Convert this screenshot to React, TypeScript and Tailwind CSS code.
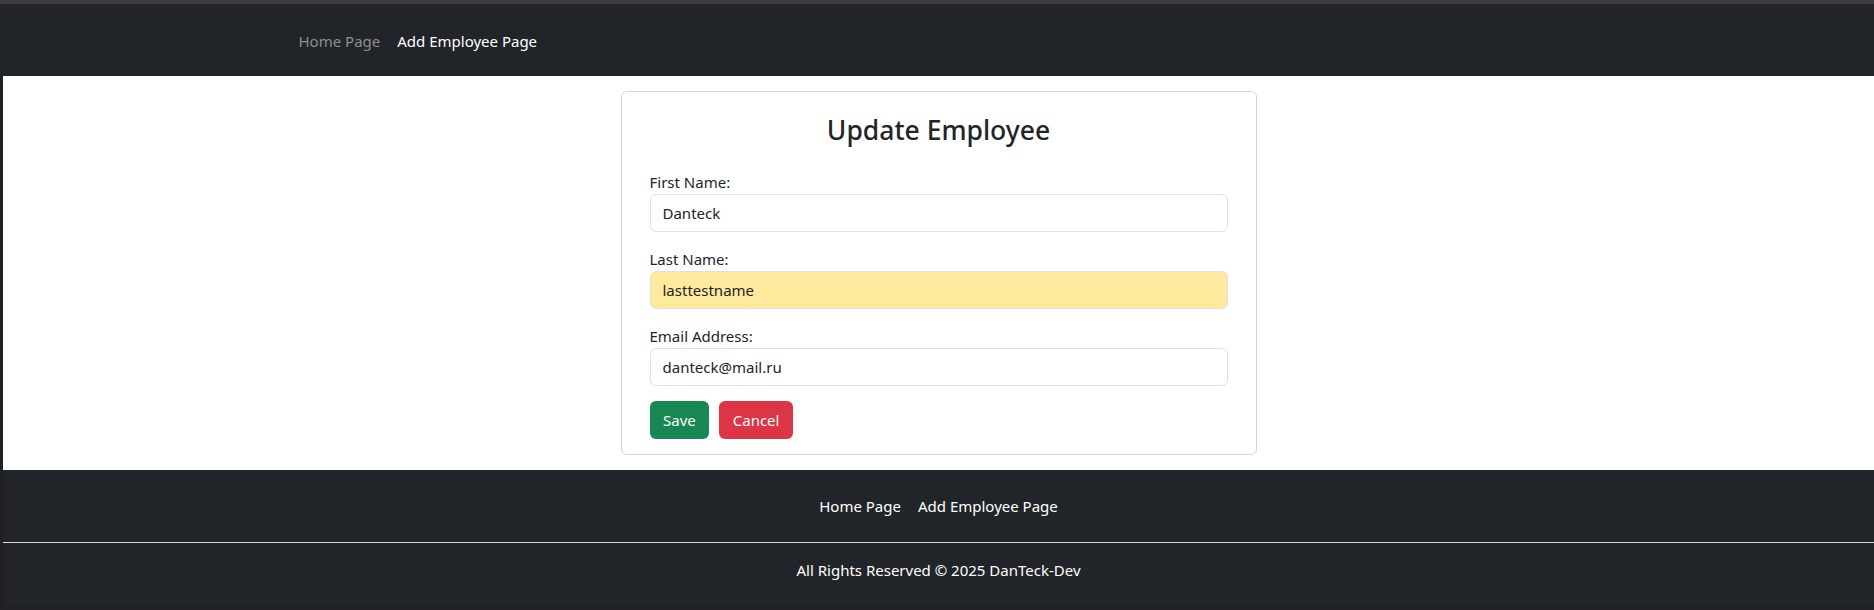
import React, { useState } from 'react';

const font = { fontFamily: '"Noto Sans", "Open Sans", sans-serif' };

interface FieldProps {
  label: string;
  value: string;
  onChange: (v: string) => void;
  autofilled?: boolean;
  last?: boolean;
}

const Field: React.FC<FieldProps> = ({ label, value, onChange, autofilled, last }) => (
  <div className={last ? 'mb-[15px]' : 'mb-4'}>
    <label className="block text-[15px] leading-[23px] text-[#212529]">{label}</label>
    <input
      value={value}
      onChange={(e) => onChange(e.target.value)}
      className={`block w-full h-[38px] px-3 text-[15px] text-[#212529] rounded-[6px] border border-[#dee2e6] outline-none ${
        autofilled ? 'bg-[#fee99c]' : 'bg-white'
      }`}
    />
  </div>
);

const App: React.FC = () => {
  const [firstName, setFirstName] = useState('Danteck');
  const [lastName, setLastName] = useState('lasttestname');
  const [email, setEmail] = useState('danteck@mail.ru');

  return (
    <div className="min-h-[610px] bg-[#202124] pl-[3px]" style={font}>
      <div className="h-[4px] bg-[#3c3d42] -ml-[3px]"></div>

      <header className="bg-[#212529] h-[72px] -ml-[3px] pl-[3px]">
        <div className="max-w-[1320px] mx-auto px-[20px] h-full flex items-center pt-[2px]">
          <nav className="flex items-center gap-[17px] text-[15px]">
            <a className="text-[#8c8f92]">Home Page</a>
            <a className="text-white">Add Employee Page</a>
          </nav>
        </div>
      </header>

      <main className="bg-white pt-[15px] pb-[15px]">
        <div className="w-[636px] mx-auto border border-[#d3d4d5] rounded-[6px] px-[28px] pt-[22px] pb-[15px]">
          <h3 className="text-center text-[26.5px] leading-[32px] font-medium text-[#212529] mb-[25px]">
            Update Employee
          </h3>
          <form onSubmit={(e) => e.preventDefault()}>
            <Field label="First Name:" value={firstName} onChange={setFirstName} />
            <Field label="Last Name:" value={lastName} onChange={setLastName} autofilled />
            <Field label="Email Address:" value={email} onChange={setEmail} last />
            <div className="flex gap-[10px]">
              <button className="h-[38px] px-[13.5px] rounded-[6px] bg-[#198754] text-white text-[15px]">Save</button>
              <button className="h-[38px] px-[13.5px] rounded-[6px] bg-[#dc3545] text-white text-[15px]">Cancel</button>
            </div>
          </form>
        </div>
      </main>

      <footer className="bg-[#212529] text-white text-[15px]">
        <div className="flex justify-center gap-[17px] pt-[24px] pb-[24px] leading-6">
          <a>Home Page</a>
          <a>Add Employee Page</a>
        </div>
        <hr className="border-0 border-t border-[#d8d9da]" />
        <p className="text-center leading-6 pt-[15px] pb-[24px]">All Rights Reserved © 2025 DanTeck-Dev</p>
      </footer>
    </div>
  );
};

export default App;
